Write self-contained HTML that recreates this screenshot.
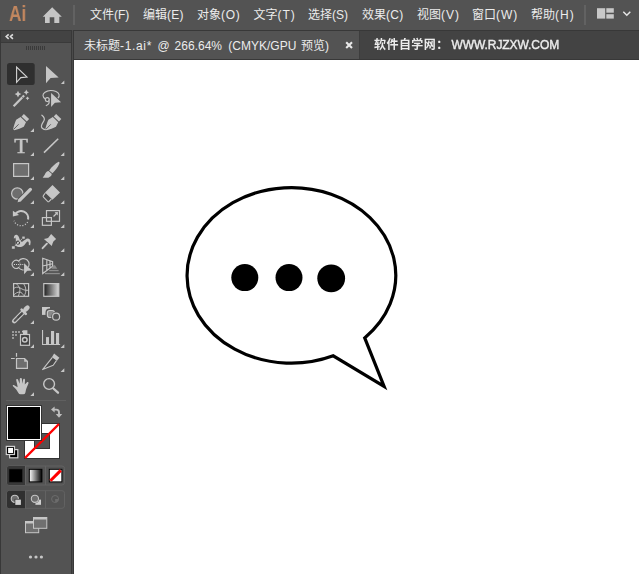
<!DOCTYPE html>
<html><head><meta charset="utf-8">
<style>
html,body{margin:0;padding:0;}
body{width:639px;height:574px;overflow:hidden;background:#383838;position:relative;font-family:"Liberation Sans","Noto Sans CJK SC",sans-serif;}
.abs{position:absolute;}
#menubar{left:0;top:0;width:639px;height:30px;background:#535353;}
.tt{top:2px !important;height:27px;line-height:27px !important;}
.mi{position:absolute;top:0.5px;height:28px;line-height:28px;font-size:12px;color:#ececec;white-space:nowrap;}
#tabbar{left:74px;top:31px;width:565px;height:28px;background:#434343;}
#tab{left:0;top:0;width:285px;height:28px;background:#535353;}
#canvas{left:74px;top:60px;width:565px;height:514px;background:#fff;}
#panel{left:1px;top:31px;width:70px;height:543px;background:#535353;}
#phead{left:0;top:0;width:70px;height:11px;background:#434343;border-bottom:1px solid #3a3a3a;}
#ai{left:8.6px;top:0px;height:28px;line-height:28px;font-size:22px;font-weight:bold;color:#c2875f;transform-origin:0 50%;transform:scaleX(0.78);will-change:transform;}
.sep{background:#626262;width:2px;top:5px;height:20px;}
</style></head><body>
<div id="menubar" class="abs">
 <div id="ai" class="abs">Ai</div>
 <div class="abs sep" style="left:73px"></div>
 <span class="mi" style="left:90px">文件(F)</span>
 <span class="mi" style="left:143px">编辑<span style="letter-spacing:0.25px">(E)</span></span>
 <span class="mi" style="left:197px">对象<span style="letter-spacing:0.65px">(O)</span></span>
 <span class="mi" style="left:253.5px">文字<span style="letter-spacing:0.9px">(T)</span></span>
 <span class="mi" style="left:308px">选择(S)</span>
 <span class="mi" style="left:362px">效果<span style="letter-spacing:0.25px">(C)</span></span>
 <span class="mi" style="left:417px">视图<span style="letter-spacing:1.0px">(V)</span></span>
 <span class="mi" style="left:472px">窗口<span style="letter-spacing:1.0px">(W)</span></span>
 <span class="mi" style="left:531px">帮助<span style="letter-spacing:1.0px">(H)</span></span>
 <div class="abs sep" style="left:584px"></div>
</div>
<div id="tabbar" class="abs">
 <div id="tab" class="abs"></div>
 <span class="mi tt" style="left:10px;"><span style="word-spacing:2.27px">未标题<span style="letter-spacing:0.66px">-1.ai*</span> </span><span style="word-spacing:1.48px">@ </span><span style="word-spacing:2.99px">266.64% </span><span style="word-spacing:1.35px">(CMYK/GPU </span>预览)</span>
 <div class="abs" style="left:285px;top:0;width:1px;height:28px;background:#3d3d3d"></div>
 <span class="mi tt" style="left:299.5px;top:1px !important;will-change:transform;"><span style="font-weight:bold;letter-spacing:0.45px">软件自学网：</span><span style="margin-left:2.8px;-webkit-text-stroke:0.4px #ececec;letter-spacing:-0.08px">WWW.RJZXW.COM</span></span>
</div>
<div class="abs" style="left:72px;top:30px;width:1px;height:544px;background:#4b4b4b"></div>
<div id="canvas" class="abs"></div>
<div id="panel" class="abs"><div id="phead" class="abs"></div></div>
<svg class="abs" style="left:0;top:0" width="639" height="574" viewBox="0 0 639 574">
 <!-- top bar icons -->
 <g id="topicons">
  <path d="M52.2 7.2 L61.8 16.8 L59.3 16.8 L59.3 23 L54.3 23 L54.3 17.3 L49.7 17.3 L49.7 23 L45 23 L45 16.8 L42.7 16.8 Z" fill="#c6c6c6"/>
  <rect x="597" y="8.2" width="8.2" height="10.4" fill="#c8c8c8"/>
  <rect x="606.3" y="8.2" width="7.5" height="4.5" fill="#c8c8c8"/>
  <rect x="606.3" y="14.2" width="7.5" height="4.4" fill="#c8c8c8"/>
  <path d="M623.3 11.7 L626.8 15.2 L630.3 11.7" fill="none" stroke="#e6e6e6" stroke-width="1.5"/>
  <path d="M346.2 42.2 L352 47.9 M352 42.2 L346.2 47.9" stroke="#e8e8e8" stroke-width="2.1" fill="none"/>
 </g>
 <!-- artwork -->
 <path d="M364.7 337.9 L384.1 386.4 L333.2 355.85 A104.35 87.8 0 1 1 364.7 337.9 Z" fill="#fff" stroke="#000" stroke-width="3.2" stroke-miterlimit="10"/>
 <circle cx="244.8" cy="277.6" r="13.5" fill="#000"/>
 <circle cx="289" cy="277.6" r="13.5" fill="#000"/>
 <circle cx="331.2" cy="278.3" r="13.9" fill="#000"/>
 <!--TOOLS_START-->
 <g id="tools" fill="#c6c6c6" stroke="none">
  <!-- header collapse chevrons -->
  <path d="M8.7 34.3 L6.2 36.6 L8.7 38.9 M12.9 34.3 L10.4 36.6 L12.9 38.9" fill="none" stroke="#dcdcdc" stroke-width="1.6"/>
  <!-- grip -->
  <g fill="#3a3a3a"><rect x="26" y="46" width="1" height="4"/><rect x="28" y="46" width="1" height="4"/><rect x="30" y="46" width="1" height="4"/><rect x="32" y="46" width="1" height="4"/><rect x="34" y="46" width="1" height="4"/><rect x="36" y="46" width="1" height="4"/><rect x="38" y="46" width="1" height="4"/><rect x="40" y="46" width="1" height="4"/><rect x="42" y="46" width="1" height="4"/><rect x="44" y="46" width="1" height="4"/></g>
  <!-- selected bg -->
  <rect x="7" y="63" width="27.7" height="22" rx="2.5" fill="#2f2f2f"/>
  <!-- selection tool -->
  <path d="M16.6 67 L16.6 82.3 L20.8 77.6 L27 77 Z" fill="none" stroke="#d4d4d4" stroke-width="1.1" stroke-linejoin="miter"/>
  <!-- direct selection -->
  <path d="M46 66 L46 83.2 L50.6 78 L58.7 77.5 Z"/>
  <path d="M64.3 80.6 L64.3 84 L60.9 84 Z"/>
  <!-- magic wand -->
  <path d="M14.4 107 L24.9 96.3 L23.3 94.7 L12.8 105.4 Z"/>
  <path d="M21.6 96.4 L23.2 98" stroke="#535353" stroke-width="0.7" fill="none"/>
  <path d="M18 90.8 L19.1 93 L21.3 94.1 L19.1 95.2 L18 97.4 L16.9 95.2 L14.7 94.1 L16.9 93 Z"/>
  <path d="M26.3 89.6 L27.2 91.4 L29 92.3 L27.2 93.2 L26.3 95 L25.4 93.2 L23.6 92.3 L25.4 91.4 Z"/>
  <path d="M27.5 96.4 L28.2 97.6 L29.4 98.3 L28.2 99 L27.5 100.2 L26.8 99 L25.6 98.3 L26.8 97.6 Z"/>
  <!-- lasso -->
  <path d="M45.3 98.9 A8.1 4.9 0 1 1 57.8 98.2" fill="none" stroke="#c6c6c6" stroke-width="1.15"/>
  <circle cx="47.3" cy="99.6" r="1.9" fill="#4a4a4a" stroke="#c6c6c6" stroke-width="1.25"/>
  <path d="M49 101 C49.5 103.2 48.4 104.7 46.3 105.5" fill="none" stroke="#c6c6c6" stroke-width="1.25" stroke-linecap="round"/>
  <path d="M51.1 93 L51.1 107 L54.9 102.8 L61.1 102.3 Z" stroke="#535353" stroke-width="1.2"/>
  <path d="M51.1 93 L51.1 107 L54.9 102.8 L61.1 102.3 Z"/>
  <!-- pen -->
  <g>
   <path d="M13.1 129.4 C13.5 126.6 14.9 122.6 16.2 119.7 L20.6 117.1 L26 122.3 L23.8 126.7 C21 128 17.8 129.5 14.4 130.2 Z"/>
   <path d="M21.5 116.4 L23.9 114 L29.1 119 L26.8 121.5 Z"/>
   <path d="M13.6 129.4 L18.6 124.3" stroke="#535353" stroke-width="0.9" fill="none"/>
  </g>
  <path d="M34 128.3 L34 132 L30.3 132 Z"/>
  <!-- curvature pen -->
  <g transform="translate(32.2 0)">
   <path d="M13.1 129.4 C13.5 126.6 14.9 122.6 16.2 119.7 L20.6 117.1 L26 122.3 L23.8 126.7 C21 128 17.8 129.5 14.4 130.2 Z"/>
   <path d="M21.5 116.4 L23.9 114 L29.1 119 L26.8 121.5 Z"/>
   <path d="M13.6 129.4 L18.6 124.3" stroke="#535353" stroke-width="0.9" fill="none"/>
  </g>
  <path d="M41.9 115.2 C44.6 117.3 45.2 118.6 43.8 121 C42 124 40.2 126.2 42 128 C43 129 44 129.5 45.3 129.6" fill="none" stroke="#c6c6c6" stroke-width="1.2" stroke-linecap="round"/>
  <!-- type -->
  <text x="21" y="153.1" text-anchor="middle" font-family="Liberation Serif, serif" font-size="20.4" stroke="#c6c6c6" stroke-width="0.45" transform="translate(21 0) scale(1.1 1) translate(-21 0)" fill="#c6c6c6">T</text>
  <path d="M34 152.3 L34 156 L30.3 156 Z"/>
  <!-- line -->
  <path d="M44 152.6 L58.2 138.8" stroke="#c6c6c6" stroke-width="1.6" fill="none"/>
  <path d="M64.3 152.3 L64.3 156 L60.6 156 Z"/>
  <!-- rectangle -->
  <rect x="13.6" y="163.6" width="15" height="12.8" fill="#6e6e6e" stroke="#c6c6c6" stroke-width="1.2"/>
  <path d="M34 176.3 L34 180 L30.3 180 Z"/>
  <!-- brush -->
  <path d="M58.6 161.8 C59.6 162 59.6 163 59.2 164 C57.6 167.6 55 171 52.4 173.2 L49.2 170.4 C51.6 167 55.4 163.4 58.6 161.8 Z"/>
  <path d="M48.5 171 C45.5 171.3 45.3 174.8 42.7 177.7 L48.3 177.7 C50.8 176.8 52 175.2 51.7 173.8 Z"/>
  <path d="M64.3 176.3 L64.3 180 L60.6 180 Z"/>
  <!-- shaper -->
  <circle cx="17.3" cy="193.5" r="5.7" fill="#6e6e6e" stroke="#c6c6c6" stroke-width="1.2"/>
  <path d="M30.4 189.4 L20 199.8" stroke="#535353" stroke-width="5" stroke-linecap="round" fill="none"/><path d="M18.6 198.4 L21.4 201.2 L17.2 202.5 Z" stroke="#535353" stroke-width="1"/><path d="M30.4 189.4 L20 199.8" stroke="#c6c6c6" stroke-width="3.3" stroke-linecap="round" fill="none"/><path d="M18.83 198.63 L21.17 200.97 L17.5 202.2 Z"/>
  <path d="M34 200.3 L34 204 L30.3 204 Z"/>
  <!-- eraser -->
  <path d="M45.3 193 L43.4 195.6 C43 196.2 43 196.6 43.5 197.1 L47.6 201.4 C48.1 201.9 48.6 201.9 49.1 201.4 L51.4 199" fill="#4c4c4c" stroke="#c6c6c6" stroke-width="1.1"/>
  <path d="M52.5 184.9 L60 192.4 L52.5 199.8 L45 192.5 Z"/>
  <path d="M64.3 200.3 L64.3 204 L60.6 204 Z"/>
  <!-- rotate -->
  <path d="M15.4 213.9 A7.1 7.1 0 0 1 28.07 219.55" fill="none" stroke="#c6c6c6" stroke-width="2.1"/>
  <path d="M12.9 210.7 L12.9 216.5 L19.1 215 Z"/>
  <path d="M27.6 221.95 A7.5 7.5 0 0 1 14.05 220.77" fill="none" stroke="#c6c6c6" stroke-width="1.3" stroke-dasharray="1.1 1.62"/>
  <path d="M34 224.3 L34 228 L30.3 228 Z"/>
  <!-- scale -->
  <rect x="46.5" y="210.6" width="13" height="10.7" fill="none" stroke="#c6c6c6" stroke-width="1.2"/>
  <rect x="42.4" y="217.6" width="9" height="7.7" fill="none" stroke="#c6c6c6" stroke-width="1.2"/>
  <path d="M53.5 216.5 L56.5 213.5" stroke="#c6c6c6" stroke-width="1.2" fill="none"/>
  <path d="M54.6 212.2 L57.9 212.1 L57.8 215.4 Z"/>
  <path d="M64.3 224.3 L64.3 228 L60.6 228 Z"/>
  <!-- width tool -->
  <path d="M13.9 238.8 C13.6 236 15 234.6 16.6 234.8 C18.6 235.2 19.2 238 20 240.3 C20.6 241.6 21.4 242 22.6 241.4 C24.4 240.4 25.8 238.3 28 238.4 C30 238.6 30.8 240.6 30.6 242.4 L30.2 245.2 L28.8 245 C29 243.4 28.8 241.4 27.6 241.6 C26.2 242 25 245.6 21.8 246.8 C19.8 247.4 17.4 247.2 15.6 245.8 C15.8 243 16.2 240 15.4 237.6 Z"/>
  <circle cx="18" cy="242.7" r="1.6" fill="none" stroke="#454545" stroke-width="1.1"/>
  <path d="M13.4 247.4 L23.4 237.5" stroke="#c6c6c6" stroke-width="0.9" fill="none"/>
  <rect x="11.8" y="246" width="3.2" height="3" stroke="#535353" stroke-width="0.5"/>
  <rect x="22" y="236.2" width="3" height="2.8" stroke="#535353" stroke-width="0.5"/>
  <path d="M34 248.3 L34 252 L30.3 252 Z"/>
  <!-- pin -->
  <path d="M51.1 234.1 L56.1 239.05 L53.4 241.4 C52.6 242.8 52.2 244.4 51.8 245.9 L43.9 239.05 C45.4 238.9 47 238.6 48.3 237.8 Z"/>
  <path d="M46.9 243.7 L42.6 248.2" stroke="#c6c6c6" stroke-width="1.9" fill="none" stroke-linecap="round"/>
  <path d="M64.3 248.3 L64.3 252 L60.6 252 Z"/>
  <!-- shape builder -->
  <path d="M18.66 261.14 A4 4 0 0 1 18.66 267.46" fill="none" stroke="#8a8a8a" stroke-width="0.9"/>
  <path d="M18.66 261.14 A4 4 0 1 0 18.66 267.46 A5.7 5.7 0 1 0 18.66 261.14 Z" fill="none" stroke="#c6c6c6" stroke-width="1.1"/>
  <path d="M13.9 264.5 L23.6 264.5" stroke="#d0d0d0" stroke-width="1.2" stroke-dasharray="1.1 1" fill="none"/>
  <path d="M24.1 263.2 L24.1 274.2 L27.2 270.8 L31.8 270.5 Z" stroke="#535353" stroke-width="0.8"/>
  <path d="M24.1 263.2 L24.1 274.2 L27.2 270.8 L31.8 270.5 Z"/>
  <path d="M34 272.3 L34 276 L30.3 276 Z"/>
  <!-- perspective grid -->
  <path d="M42.7 258.3 L52.6 261.7 L52.6 266.2 L42.7 273.5 Z M46.8 259.8 L46.8 270.4 M50 260.8 L50 268 M42.7 266 L52.6 263.8" fill="none" stroke="#c6c6c6" stroke-width="1.15"/>
  <path d="M53.4 265.2 L55 265.2 L57.3 268.7 L51.4 268.7 Z" fill="#8c8c8c"/>
  <rect x="49.2" y="269.9" width="9.4" height="1.3" fill="#8c8c8c"/>
  <rect x="45" y="272.9" width="14.8" height="1.3" fill="#8c8c8c"/>
  <path d="M64.3 272.3 L64.3 276 L60.6 276 Z"/>
  <!-- mesh -->
  <rect x="13.6" y="283.6" width="15" height="12.7" fill="#484848" stroke="#c6c6c6" stroke-width="1.2"/>
  <path d="M16.6 284 C19 286 20.4 288.6 19.8 291.5 C19.5 293 18.8 294.6 18.4 296 M23.8 284 C25.4 286.4 26.4 289.6 25.6 292.6 C25.2 294 24.6 295 24.2 296 M13.8 288.4 C15.6 287 17.8 286.8 19.8 287.8 C22.4 289.2 25 291 28.6 290.2 M13.8 294.8 C15.6 293.4 17.4 292 19.6 292 C21.6 292.2 22.8 294 23.8 295.6" fill="none" stroke="#c6c6c6" stroke-width="0.9"/>
  <!-- gradient -->
  <defs><linearGradient id="g1" x1="0" x2="1" y1="0" y2="0"><stop offset="0" stop-color="#1e1e1e"/><stop offset="1" stop-color="#d8d8d8"/></linearGradient>
  <linearGradient id="g2" x1="0" x2="1" y1="0" y2="0"><stop offset="0" stop-color="#fff"/><stop offset="1" stop-color="#000"/></linearGradient></defs>
  <rect x="43.8" y="283.6" width="15" height="12.7" fill="url(#g1)" stroke="#c6c6c6" stroke-width="1.2"/>
  <!-- eyedropper -->
  <path d="M23.2 312.2 L14.3 321.1" stroke="#c6c6c6" stroke-width="4.7" stroke-linecap="round" fill="none"/>
  <path d="M23 312.4 L14.7 320.7" stroke="#535353" stroke-width="2.2" stroke-linecap="round" fill="none"/>
  <path d="M21.7 313.7 L17.7 317.7" stroke="#3a3a3a" stroke-width="2" stroke-dasharray="0.8 0.7" fill="none"/>
  <path d="M21.6 309.6 L25.8 313.8" stroke="#c6c6c6" stroke-width="2.6" stroke-linecap="round" fill="none"/>
  <ellipse cx="26.4" cy="308.6" rx="3.7" ry="2.4" transform="rotate(-45 26.4 308.6)"/>
  <path d="M34 320.3 L34 324 L30.3 324 Z"/>
  <!-- blend -->
  <rect x="42" y="307" width="8" height="7.9" fill="#c8c8c8"/>
  <rect x="46.8" y="309.9" width="8.2" height="8.2" rx="2.6" fill="#8a8a8a" stroke="#535353" stroke-width="2.6"/>
  <rect x="47.4" y="310.5" width="7" height="7" rx="2.2" fill="#8a8a8a" stroke="#c6c6c6" stroke-width="1.2"/>
  <circle cx="56.1" cy="316.7" r="3.5" fill="#535353" stroke="#535353" stroke-width="2.8"/>
  <circle cx="56.1" cy="316.7" r="3.5" fill="#535353" stroke="#c6c6c6" stroke-width="1.2"/>
  <!-- symbol sprayer -->
  <g fill="#9a9a9a"><rect x="12" y="331" width="2" height="2"/><rect x="15" y="331" width="2" height="2"/><rect x="18" y="331" width="2" height="2"/><rect x="12" y="334" width="2" height="2"/><rect x="15" y="334" width="2" height="2"/><rect x="12" y="337" width="2" height="2"/></g>
  <rect x="20.5" y="334.5" width="9" height="10.8" fill="#3e3e3e" stroke="#c6c6c6" stroke-width="1.2"/>
  <path d="M23 334 L23 332.4 L22 332.2 L22 331 L23.4 330.2 L27.4 330.2 L27.4 334 Z"/>
  <circle cx="24.8" cy="339.8" r="2.3" fill="#3e3e3e" stroke="#c6c6c6" stroke-width="1.5"/>
  <path d="M34 344.3 L34 348 L30.3 348 Z"/>
  <!-- graph -->
  <path d="M42 330 L43.1 330 L43.1 343.9 L60.1 343.9 L60.1 345 L42 345 Z"/>
  <rect x="46" y="337.1" width="3" height="6.9"/><rect x="51" y="331" width="3.1" height="13"/><rect x="56" y="333" width="3.1" height="11"/>
  <path d="M64.3 344.3 L64.3 348 L60.6 348 Z"/>
  <!-- artboard -->
  <path d="M16.5 358.5 L24.6 358.5 L27.4 361.3 L27.4 368.4 L16.5 368.4 Z" fill="#6e6e6e" stroke="#c6c6c6" stroke-width="1.2"/>
  <path d="M24.2 358.4 L27.6 361.8 L24.2 361.8 Z"/>
  <path d="M16.5 353 L16.5 356.8 M11 358.5 L14.8 358.5" stroke="#c6c6c6" stroke-width="1.2" fill="none"/>
  <!-- slice -->
  <path d="M54.1 353.5 L59.4 357.7 L56.8 361 L51.7 357.4 Z"/>
  <path d="M52.2 357.6 L42.6 369.6 L53.2 365.2 L56.4 360.6" fill="#474747" stroke="#c6c6c6" stroke-width="1.1" stroke-linejoin="round"/>
  <path d="M64.3 368.3 L64.3 372 L60.6 372 Z"/>
  <!-- hand -->
  <path d="M19.2 394 C17.8 392.6 17.2 390.6 15.8 389 L12.8 386 C12.6 385.2 13.4 384.8 14.2 385.2 L17.6 387.2 C17.4 384.6 16.6 382.2 16.2 380 C16.2 378.8 17.6 378.6 18 379.6 L19.6 383.8 L19.8 379 C19.9 377.6 21.8 377.6 21.9 379 L22.3 383.8 L23.1 379.8 C23.3 378.4 25 378.6 25 380 L24.8 384.6 L26.8 382.4 C27.6 381.6 28.8 382.2 28.4 383.4 C27.4 386 26.2 388.4 25.8 390.4 C25.6 392 25.4 393 24.6 394 C23 394.4 20.8 394.4 19.2 394 Z"/>
  <path d="M34 392.3 L34 396 L30.3 396 Z"/>
  <!-- zoom -->
  <circle cx="49.1" cy="384" r="5.4" fill="none" stroke="#c6c6c6" stroke-width="1.4"/>
  <path d="M53.4 388.5 L58 392.7" stroke="#c6c6c6" stroke-width="2.3" stroke-linecap="round" fill="none"/>
  <!-- separator -->
  <rect x="6" y="400" width="60" height="1" fill="#606060"/>
  <!-- stroke swatch -->
  <rect x="24" y="423" width="36" height="36" fill="#333"/>
  <rect x="25" y="424" width="34" height="34" fill="#fff"/>
  <rect x="34" y="433" width="16" height="16" fill="#333"/>
  <rect x="35" y="434" width="14" height="14" fill="#535353"/>
  <path d="M25 458 L59 424" stroke="#ff0000" stroke-width="2.4" fill="none"/>
  <!-- fill swatch -->
  <rect x="6" y="405" width="36" height="36" fill="#333"/>
  <rect x="7" y="406" width="34" height="34" fill="#fff"/>
  <rect x="8" y="407" width="32" height="32" fill="#000"/>
  <!-- swap -->
  <path d="M54 409.6 L56.3 409.6 Q59 409.6 59 412.4 L59 414.6" fill="none" stroke="#bdbdbd" stroke-width="1.9"/>
  <path d="M51 409.4 L54.6 406.4 L54.6 412.6 Z" fill="#bdbdbd"/>
  <path d="M59 417.8 L55.8 414 L62.2 414 Z" fill="#bdbdbd"/>
  <!-- default -->
  <rect x="9.6" y="449.6" width="8.2" height="8.2" fill="#000" stroke="#d0d0d0" stroke-width="1.2"/>
  <rect x="6.3" y="446.4" width="8.2" height="8.1" fill="#000" stroke="#d0d0d0" stroke-width="1.2"/>
  <rect x="8.1" y="447.9" width="4.9" height="5.1" fill="#fff"/>
  <!-- color mode group -->
  <rect x="7" y="466" width="57.5" height="19" rx="2.5" fill="#535353" stroke="#626262" stroke-width="1"/>
  <path d="M9.5 466 L25 466 L25 485 L9.5 485 A2.5 2.5 0 0 1 7 482.5 L7 468.5 A2.5 2.5 0 0 1 9.5 466 Z" fill="#383838"/>
  <path d="M25.5 466 L25.5 485 M45.5 466 L45.5 485" stroke="#626262" stroke-width="1" fill="none"/>
  <rect x="9" y="469" width="13.4" height="13.2" fill="#000" stroke="#2a2a2a" stroke-width="0.6"/>
  <rect x="29.3" y="469.3" width="12.6" height="12.6" fill="url(#g2)" stroke="#000" stroke-width="1"/>
  <rect x="49.3" y="469.3" width="12.6" height="12.6" fill="#fff" stroke="#000" stroke-width="1"/>
  <path d="M50.4 480.8 L60.8 470.4" stroke="#ff0000" stroke-width="3" fill="none"/>
  <!-- draw mode group -->
  <rect x="7" y="490.7" width="57.5" height="17.6" rx="2.5" fill="#535353" stroke="#626262" stroke-width="1"/>
  <path d="M9.5 490.7 L25 490.7 L25 508.3 L9.5 508.3 A2.5 2.5 0 0 1 7 505.8 L7 493.2 A2.5 2.5 0 0 1 9.5 490.7 Z" fill="#303030"/>
  <path d="M25.5 490.7 L25.5 508.3 M45.5 490.7 L45.5 508.3" stroke="#626262" stroke-width="1" fill="none"/>
  <circle cx="14.8" cy="498.8" r="3.6" fill="#6e6e6e" stroke="#c6c6c6" stroke-width="1.1"/>
  <rect x="14.6" y="498.9" width="6.8" height="6.5" fill="#303030"/><rect x="15.3" y="499.6" width="5.6" height="5.3" fill="#d0d0d0"/>
  <rect x="35.4" y="499.6" width="5.6" height="5.2" fill="#d0d0d0"/>
  <circle cx="34.9" cy="498.8" r="3.6" fill="#6e6e6e" stroke="#535353" stroke-width="1.7"/>
  <circle cx="34.9" cy="498.8" r="3.6" fill="#6e6e6e" stroke="#c6c6c6" stroke-width="1.1"/>
  <circle cx="55.1" cy="499" r="3.5" fill="none" stroke="#6c6c6c" stroke-width="1"/>
  <path d="M55.1 499 L58.6 499 A3.5 3.5 0 0 1 55.1 502.5 Z" fill="#6c6c6c"/>
  <!-- screen mode -->
  <rect x="25.5" y="521.5" width="13.2" height="11.2" fill="#707070" stroke="#c6c6c6" stroke-width="1"/>
  <rect x="25.5" y="521.5" width="13.2" height="2" fill="#c6c6c6"/>
  <rect x="33.5" y="517.5" width="13.3" height="10.8" fill="#707070" stroke="#c6c6c6" stroke-width="1"/>
  <rect x="33.5" y="517.5" width="13.3" height="2" fill="#c6c6c6"/>
  <!-- dots -->
  <circle cx="30.5" cy="557" r="1.6"/><circle cx="36" cy="557" r="1.6"/><circle cx="41.4" cy="557" r="1.6"/>
 </g>
<!--TOOLS_END-->
</svg>
</body></html>
